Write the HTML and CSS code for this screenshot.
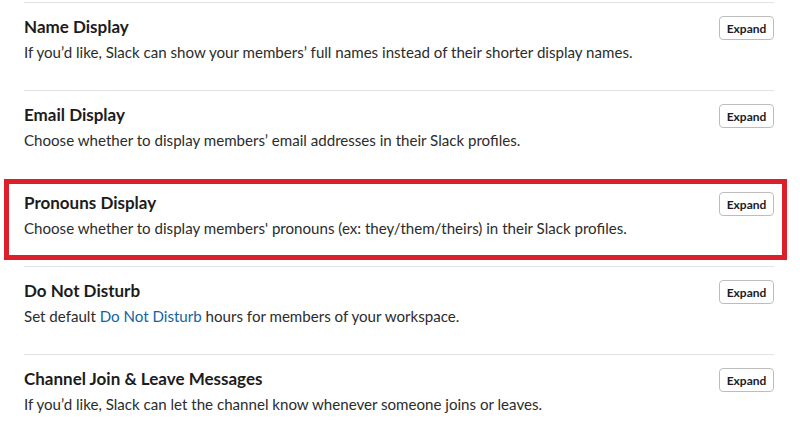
FILE: index.html
```html
<!DOCTYPE html>
<html lang="en">
<head>
<meta charset="utf-8">
<title>Settings</title>
<link rel="stylesheet" href="styles.css">
</head>
<body>
<div class="settings">
  <div class="row">
    <div class="text">
      <div class="title">Name Display</div>
      <div class="desc">If you’d like, Slack can show your members’ full names instead of their shorter display names.</div>
    </div>
    <button class="btn">Expand</button>
  </div>
  <div class="row">
    <div class="text">
      <div class="title">Email Display</div>
      <div class="desc">Choose whether to display members’ email addresses in their Slack profiles.</div>
    </div>
    <button class="btn">Expand</button>
  </div>
  <div class="row highlight">
    <div class="text">
      <div class="title">Pronouns Display</div>
      <div class="desc">Choose whether to display members' pronouns (ex: they/them/theirs) in their Slack profiles.</div>
    </div>
    <button class="btn">Expand</button>
  </div>
  <div class="row">
    <div class="text">
      <div class="title">Do Not Disturb</div>
      <div class="desc">Set default <a class="link" href="#">Do Not Disturb</a> hours for members of your workspace.</div>
    </div>
    <button class="btn">Expand</button>
  </div>
  <div class="row">
    <div class="text">
      <div class="title">Channel Join &amp; Leave Messages</div>
      <div class="desc">If you’d like, Slack can let the channel know whenever someone joins or leaves.</div>
    </div>
    <button class="btn">Expand</button>
  </div>
</div>
</body>
</html>
```

FILE: styles.css
```css
html, body {
  margin: 0;
  padding: 0;
  background: #ffffff;
}
body {
  font-family: Lato, "Liberation Sans", sans-serif;
  color: #1d1c1d;
  overflow: hidden;
}
.settings {
  width: 750px;
  padding: 2px 0 0 24px;
}
.row {
  position: relative;
  box-sizing: border-box;
  height: 88px;
  border-top: 1px solid #e2e2e2;
  padding-top: 12px;
  display: flex;
  justify-content: space-between;
  align-items: flex-start;
}
.title {
  font-size: 17px;
  font-weight: 700;
  line-height: 24px;
  color: #1d1c1d;
}
.desc {
  margin-top: 2px;
  font-size: 15.1px;
  line-height: 22px;
  color: #2c2c2c;
}
.link {
  color: #1264a3;
  text-decoration: none;
}
.btn {
  margin-top: 1px;
  box-sizing: border-box;
  width: 55px;
  height: 24px;
  padding: 0;
  border: 1px solid #bdbdbd;
  border-radius: 4px;
  background: #ffffff;
  font-family: Lato, "Liberation Sans", sans-serif;
  font-size: 12px;
  font-weight: 700;
  color: #1d1c1d;
  cursor: pointer;
}
.highlight {
  border-top-color: transparent;
}
.highlight::after {
  content: "";
  position: absolute;
  top: 0;
  bottom: 6px;
  left: -20px;
  right: -13px;
  border: 5px solid #dc1f2b;
  pointer-events: none;
}
```
